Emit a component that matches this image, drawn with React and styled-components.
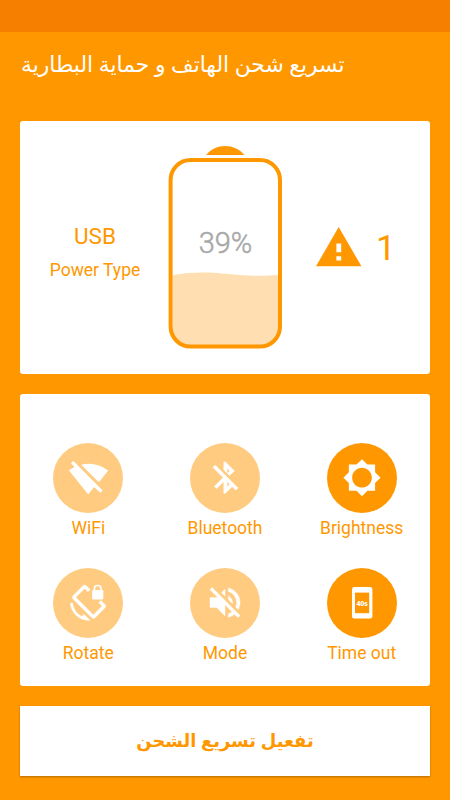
import React from "react";
import styled, { createGlobalStyle } from "styled-components";

const toggles = [
  {
    label: "WiFi",
    active: false,
    icon: (
      <path d="M20.4 18 L49.7 47.4 L47.3 49.8 L41 43.9 L35.3 51.6 L16 27.4 Q18.6 25 21.6 23.9 L18 20.3 Z M28.2 21.8 Q42.5 18.4 55.2 27.4 L46.6 38.6 H45 Z" />
    ),
  },
  {
    label: "Bluetooth",
    active: false,
    icon: (
      <path
        transform="translate(16.7 15.9) scale(1.56)"
        stroke="#fff"
        strokeWidth="0.4"
        d="M13 5.83l1.88 1.88-1.6 1.6 1.41 1.41 3.02-3.02L12 2h-1v5.03l2 2v-3.2zM5.41 4L4 5.41 10.59 12 5 17.59 6.41 19 11 14.41V22h1l4.29-4.29 2.3 2.29L20 18.59 5.41 4zM13 18.17v-3.76l1.88 1.88L13 18.17z"
      />
    ),
  },
  {
    label: "Brightness",
    active: true,
    icon: (
      <path
        transform="translate(15.3 15) scale(1.64)"
        d="M20 15.31L23.31 12 20 8.69V4h-4.69L12 .69 8.69 4H4v4.69L.69 12 4 15.31V20h4.69L12 23.31 15.31 20H20v-4.69zM12 18c-3.31 0-6-2.69-6-6s2.69-6 6-6 6 2.69 6 6-2.69 6-6 6z"
      />
    ),
  },
  {
    label: "Rotate",
    active: false,
    icon: (
      <>
        <path
          transform="translate(15.8 16.6) scale(1.555)"
          stroke="#fff"
          strokeWidth="0.3"
          d="M23.25 12.77l-2.57-2.57-1.41 1.41 2.22 2.22-5.66 5.66L4.51 8.17l5.66-5.66 2.1 2.1 1.41-1.41L11.23.75c-.59-.59-1.54-.59-2.12 0L2.75 7.11c-.59.59-.59 1.54 0 2.12l12.02 12.02c.59.59 1.54.59 2.12 0l6.36-6.36c.59-.59.59-1.54 0-2.12zM8.47 20.48C5.2 18.94 2.86 15.76 2.5 12H1c.51 6.16 5.66 11 11.95 11l.66-.03-3.81-3.82-1.33 1.33z"
        />
        <rect x="39.1" y="22.1" width="11.2" height="9.4" rx="1.2" />
        <path
          d="M41.4 23 V20.8 Q41.4 17.5 44.7 17.5 Q48 17.5 48 20.8 V23"
          fill="none"
          stroke="#fff"
          strokeWidth="1.7"
        />
      </>
    ),
  },
  {
    label: "Mode",
    active: false,
    icon: (
      <path
        transform="translate(15 14.6) scale(1.667)"
        stroke="#fff"
        strokeWidth="0.25"
        d="M16.5 12c0-1.77-1.02-3.29-2.5-4.03v2.21l2.45 2.45c.03-.2.05-.41.05-.63zm2.5 0c0 .94-.2 1.82-.54 2.64l1.51 1.51C20.63 14.91 21 13.5 21 12c0-4.28-2.99-7.86-7-8.77v2.06c2.89.86 5 3.54 5 6.71zM4.27 3L3 4.27 7.73 9H3v6h4l5 5v-6.73l4.25 4.25c-.67.52-1.42.93-2.25 1.18v2.06c1.38-.31 2.63-.95 3.69-1.81L19.73 21 21 19.73l-9-9L4.27 3zM12 4L9.91 6.09 12 8.18V4z"
      />
    ),
  },
  {
    label: "Time out",
    active: true,
    icon: (
      <>
        <rect x="25" y="19" width="20.4" height="31.6" rx="2.4" />
        <rect x="28" y="24.6" width="14.2" height="20.6" fill="#ff9800" />
        <text x="35.1" y="37.6" textAnchor="middle">
          40s
        </text>
      </>
    ),
  },
];

const Battery = ({ level }) => {
  return (
    <BatteryBox>
      <svg width="115" height="205" viewBox="0 0 115 205">
        <path d="M38 10 C48 -2 66 -2 76.6 10 Z" fill="#ff9800" />
        <path
          d="M4.5 130.2 C22 127 40 127 54 128.6 C75 130.5 90 131.5 110.5 130 V182 Q110.5 200.5 92 200.5 H23 Q4.5 200.5 4.5 182 Z"
          fill="#ffdfb2"
        />
        <rect
          x="2.6"
          y="15"
          width="109.4"
          height="186.6"
          rx="20"
          fill="none"
          stroke="#ff9800"
          strokeWidth="4"
        />
      </svg>
      <span className="level">{level}%</span>
    </BatteryBox>
  );
};

const App = () => {
  return (
    <Screen>
      <GlobalStyle />
      <StatusBar />
      <Header>
        <h1 dir="rtl">تسريع شحن الهاتف و حماية البطارية</h1>
      </Header>
      <PowerCard>
        <PowerType>
          <strong>USB</strong>
          <span>Power Type</span>
        </PowerType>
        <Battery level={39} />
        <Warnings>
          <svg width="46" height="40" viewBox="0 0 46 40">
            <path
              fillRule="evenodd"
              fill="#ff9800"
              d="M22.7 0 L45.4 39.2 H0 Z M20.4 16.4 V25.3 H25.2 V16.4 Z M20.4 29.2 V33.6 H25.2 V29.2 Z"
            />
          </svg>
          <span>1</span>
        </Warnings>
      </PowerCard>
      <TogglesCard>
        {toggles.map((toggle) => (
          <Toggle key={toggle.label} $active={toggle.active}>
            <div className="circle">
              <svg width="70" height="70" viewBox="0 0 70 70" fill="#fff">
                {toggle.icon}
              </svg>
            </div>
            <span>{toggle.label}</span>
          </Toggle>
        ))}
      </TogglesCard>
      <BoostButton dir="rtl">تفعيل تسريع الشحن</BoostButton>
    </Screen>
  );
};

const GlobalStyle = createGlobalStyle`
  * {
    box-sizing: border-box;
  }
  body {
    margin: 0;
    background-color: #ff9800;
    font-family: Roboto, sans-serif;
  }
`;

const Screen = styled.div`
  display: flex;
  flex-direction: column;
  height: 800px;
  overflow: hidden;
  background-color: #ff9800;
`;

const StatusBar = styled.div`
  flex: none;
  height: 32px;
  background-color: #f77f00;
`;

const Header = styled.header`
  flex: none;
  display: flex;
  align-items: center;
  height: 89px;
  padding: 0 21px 26px;
  h1 {
    margin: 0;
    font-family: "Noto Sans", "DejaVu Sans", sans-serif;
    font-size: 21.8px;
    font-weight: 400;
    line-height: 1;
    color: white;
    white-space: nowrap;
  }
`;

const PowerCard = styled.section`
  flex: none;
  display: grid;
  grid-template-columns: 148px 115px 1fr;
  height: 253px;
  margin: 0 20px;
  border-radius: 3px;
  background-color: white;
`;

const PowerType = styled.div`
  display: flex;
  flex-direction: column;
  align-items: center;
  gap: 11px;
  padding: 102px 0 0 2px;
  color: #ff9800;
  strong {
    font-size: 22.5px;
    font-weight: 400;
    line-height: 26px;
  }
  span {
    font-size: 17.5px;
    line-height: 20px;
  }
`;

const BatteryBox = styled.div`
  position: relative;
  padding-top: 24px;
  svg {
    display: block;
  }
  .level {
    position: absolute;
    top: 105px;
    left: 0;
    width: 115px;
    text-align: center;
    font-size: 29px;
    font-weight: 300;
    line-height: 34px;
    color: #a8a8a8;
    -webkit-text-stroke: 0.5px #a8a8a8;
  }
`;

const Warnings = styled.div`
  display: flex;
  align-items: flex-start;
  gap: 14px;
  padding: 106px 0 0 33px;
  span {
    margin-top: 2px;
    font-size: 35px;
    line-height: 40px;
    color: #ff9800;
  }
`;

const TogglesCard = styled.section`
  flex: none;
  display: grid;
  grid-template-columns: repeat(3, 1fr);
  grid-auto-rows: 125px;
  height: 292.5px;
  margin: 19.5px 20px 0;
  padding-top: 49.5px;
  border-radius: 3px;
  background-color: white;
`;

const Toggle = styled.div`
  display: flex;
  flex-direction: column;
  align-items: center;
  .circle {
    width: 70px;
    height: 70px;
    border-radius: 50%;
    background-color: ${({ $active }) => ($active ? "#ff9800" : "#ffcb80")};
  }
  svg {
    display: block;
  }
  text {
    font-size: 6.8px;
    font-weight: 900;
  }
  span {
    margin-top: 4px;
    font-size: 17.5px;
    line-height: 22px;
    color: #ff9800;
  }
`;

const BoostButton = styled.button`
  flex: none;
  height: 69.5px;
  margin: 20px 20px 0;
  padding: 0 0 2px;
  border: none;
  background-color: white;
  box-shadow: 0 1px 2px rgba(0, 0, 0, 0.3);
  font-family: "Noto Sans", "DejaVu Sans", sans-serif;
  font-size: 17.9px;
  font-weight: 700;
  color: #ff9800;
`;

export default App;
